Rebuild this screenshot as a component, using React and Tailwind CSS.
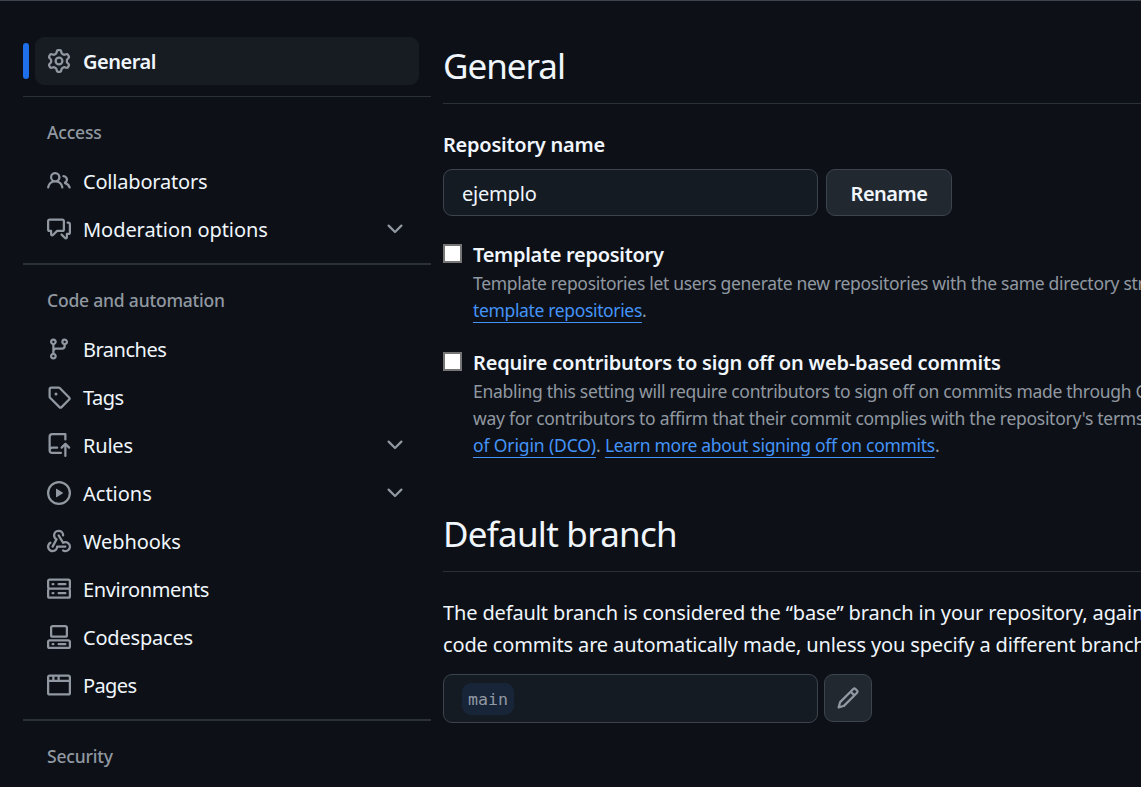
import React from "react";

const PATHS = {
  gear: "M8 0a8.2 8.2 0 0 1 .701.031C9.444.095 9.99.645 10.16 1.29l.288 1.107c.018.066.079.158.212.224.231.114.454.243.668.386.123.082.233.09.299.071l1.103-.303c.644-.176 1.392.021 1.82.63.27.385.506.792.704 1.218.315.675.111 1.422-.364 1.891l-.814.806c-.049.048-.098.147-.088.294.016.257.016.515 0 .772-.01.147.038.246.088.294l.814.806c.475.469.679 1.216.364 1.891a7.977 7.977 0 0 1-.704 1.217c-.428.61-1.176.807-1.82.63l-1.102-.302c-.067-.019-.177-.011-.3.071a5.909 5.909 0 0 1-.668.386c-.133.066-.194.158-.211.224l-.29 1.106c-.168.646-.715 1.196-1.458 1.26a8.006 8.006 0 0 1-1.402 0c-.743-.064-1.289-.614-1.458-1.26l-.289-1.106c-.018-.066-.079-.158-.212-.224a5.738 5.738 0 0 1-.668-.386c-.123-.082-.233-.09-.299-.071l-1.103.303c-.644.176-1.392-.021-1.82-.63a8.12 8.12 0 0 1-.704-1.218c-.315-.675-.111-1.422.363-1.891l.815-.806c.05-.048.098-.147.088-.294a6.214 6.214 0 0 1 0-.772c.01-.147-.038-.246-.088-.294l-.815-.806C.635 6.045.431 5.298.746 4.623a7.92 7.92 0 0 1 .704-1.217c.428-.61 1.176-.807 1.82-.63l1.102.302c.067.019.177.011.3-.071.214-.143.437-.272.668-.386.133-.066.194-.158.211-.224l.29-1.106C6.009.645 6.556.095 7.299.03 7.53.01 7.764 0 8 0Zm-.571 1.525c-.036.003-.108.036-.137.146l-.289 1.105c-.147.561-.549.967-.998 1.189-.173.086-.34.183-.5.29-.417.278-.97.423-1.529.27l-1.103-.303c-.109-.03-.175.016-.195.045-.22.312-.412.644-.573.99-.014.031-.021.11.059.19l.815.806c.411.406.562.957.53 1.456a4.709 4.709 0 0 0 0 .582c.032.499-.119 1.05-.53 1.456l-.815.806c-.081.08-.073.159-.059.19.162.346.353.677.573.989.02.03.085.076.195.046l1.102-.303c.56-.153 1.113-.008 1.53.27.161.107.328.204.501.29.447.222.85.629.997 1.189l.289 1.105c.029.109.101.143.137.146a6.6 6.6 0 0 0 1.142 0c.036-.003.108-.036.137-.146l.289-1.105c.147-.561.549-.967.998-1.189.173-.086.34-.183.5-.29.417-.278.97-.423 1.529-.27l1.103.303c.109.029.175-.016.195-.045.22-.313.411-.644.573-.99.014-.031.021-.11-.059-.19l-.815-.806c-.411-.406-.562-.957-.53-1.456a4.709 4.709 0 0 0 0-.582c-.032-.499.119-1.05.53-1.456l.815-.806c.081-.08.073-.159.059-.19a6.464 6.464 0 0 0-.573-.989c-.02-.03-.085-.076-.195-.046l-1.102.303c-.56.153-1.113.008-1.53-.27a4.44 4.44 0 0 0-.501-.29c-.447-.222-.85-.629-.997-1.189l-.289-1.105c-.029-.11-.101-.143-.137-.146a6.6 6.6 0 0 0-1.142 0ZM11 8a3 3 0 1 1-6 0 3 3 0 0 1 6 0ZM9.5 8a1.5 1.5 0 1 0-3.001.001A1.5 1.5 0 0 0 9.5 8Z",
  people: "M2 5.5a3.5 3.5 0 1 1 5.898 2.549 5.508 5.508 0 0 1 3.034 4.084.75.75 0 1 1-1.482.235 4 4 0 0 0-7.9 0 .75.75 0 0 1-1.482-.236A5.507 5.507 0 0 1 3.102 8.05 3.493 3.493 0 0 1 2 5.5ZM11 4a3.001 3.001 0 0 1 2.22 5.018 5.01 5.01 0 0 1 2.56 3.012.749.749 0 0 1-.885.954.752.752 0 0 1-.549-.514 3.507 3.507 0 0 0-2.522-2.372.75.75 0 0 1-.574-.73v-.352a.75.75 0 0 1 .416-.672A1.5 1.5 0 0 0 11 5.5.75.75 0 0 1 11 4Zm-5.5-.5a2 2 0 1 0-.001 3.999A2 2 0 0 0 5.5 3.5Z",
  discussion: "M1.75 1h8.5c.966 0 1.75.784 1.75 1.75v5.5A1.75 1.75 0 0 1 10.25 10H7.061l-2.574 2.573A1.458 1.458 0 0 1 2 11.543V10h-.25A1.75 1.75 0 0 1 0 8.25v-5.5C0 1.784.784 1 1.75 1ZM1.5 2.75v5.5c0 .138.112.25.25.25h1a.75.75 0 0 1 .75.75v2.19l2.72-2.72a.749.749 0 0 1 .53-.22h3.5a.25.25 0 0 0 .25-.25v-5.5a.25.25 0 0 0-.25-.25h-8.5a.25.25 0 0 0-.25.25Zm13 2a.25.25 0 0 0-.25-.25h-.5a.75.75 0 0 1 0-1.5h.5c.966 0 1.75.784 1.75 1.75v5.5A1.75 1.75 0 0 1 14.25 12H14v1.543a1.458 1.458 0 0 1-2.487 1.03L9.22 12.28a.749.749 0 0 1 .326-1.275.749.749 0 0 1 .734.215l2.22 2.22v-2.19a.75.75 0 0 1 .75-.75h1a.25.25 0 0 0 .25-.25Z",
  branch: "M9.5 3.25a2.25 2.25 0 1 1 3 2.122V6A2.5 2.5 0 0 1 10 8.5H6a1 1 0 0 0-1 1v1.128a2.251 2.251 0 1 1-1.5 0V5.372a2.25 2.25 0 1 1 1.5 0v1.836A2.493 2.493 0 0 1 6 7h4a1 1 0 0 0 1-1v-.628A2.25 2.25 0 0 1 9.5 3.25Zm-6 0a.75.75 0 1 0 1.5 0 .75.75 0 0 0-1.5 0Zm8.25-.75a.75.75 0 1 0 0 1.5.75.75 0 0 0 0-1.5ZM4.25 12a.75.75 0 1 0 0 1.5.75.75 0 0 0 0-1.5Z",
  tag: "M1 7.775V2.75C1 1.784 1.784 1 2.75 1h5.025c.464 0 .91.184 1.238.513l6.25 6.25a1.75 1.75 0 0 1 0 2.474l-5.026 5.026a1.75 1.75 0 0 1-2.474 0l-6.25-6.25A1.752 1.752 0 0 1 1 7.775Zm1.5 0c0 .066.026.13.073.177l6.25 6.25a.25.25 0 0 0 .354 0l5.025-5.025a.25.25 0 0 0 0-.354l-6.25-6.25a.25.25 0 0 0-.177-.073H2.75a.25.25 0 0 0-.25.25ZM6 5a1 1 0 1 1 0 2 1 1 0 0 1 0-2Z",
  push: "M1 2.5A2.5 2.5 0 0 1 3.5 0h8.75a.75.75 0 0 1 .75.75v3.5a.75.75 0 0 1-1.5 0V1.5h-8a1 1 0 0 0-1 1v6.708A2.493 2.493 0 0 1 3.5 9h3.25a.75.75 0 0 1 0 1.5H3.5a1 1 0 0 0 0 2h5.75a.75.75 0 0 1 0 1.5H3.5A2.5 2.5 0 0 1 1 11.5Zm13.23 7.79h-.001l-1.224-1.224v6.184a.75.75 0 0 1-1.5 0V9.066L10.28 10.29a.75.75 0 0 1-1.06-1.061l2.505-2.504a.75.75 0 0 1 1.06 0L15.29 9.23a.751.751 0 0 1-.018 1.042.751.751 0 0 1-1.042.018Z",
  play: "M8 0a8 8 0 1 1 0 16A8 8 0 0 1 8 0ZM1.5 8a6.5 6.5 0 1 0 13 0 6.5 6.5 0 0 0-13 0Zm4.879-2.773 4.264 2.559a.25.25 0 0 1 0 .428l-4.264 2.559A.25.25 0 0 1 6 10.559V5.442a.25.25 0 0 1 .379-.215Z",
  webhook: "M5.5 4.25a2.25 2.25 0 0 1 4.5 0 .75.75 0 0 0 1.5 0 3.75 3.75 0 1 0-6.14 2.889l-2.272 4.258a.75.75 0 0 0 1.324.706L7 7.25a.75.75 0 0 0-.309-1.015A2.25 2.25 0 0 1 5.5 4.25ZM7.364 3.607a.75.75 0 0 1 1.03.257l2.608 4.349a3.75 3.75 0 1 1-.628 6.785.75.75 0 0 1 .752-1.299 2.25 2.25 0 1 0-.033-3.88.75.75 0 0 1-1.03-.256L7.107 4.636a.75.75 0 0 1 .257-1.03ZM2.9 8.776A.75.75 0 0 1 2.625 9.8 2.25 2.25 0 1 0 6 11.75a.75.75 0 0 1 .75-.751h5.5a.75.75 0 0 1 0 1.5H7.425a3.751 3.751 0 1 1-5.55-3.998.75.75 0 0 1 1.024.274Z",
  server: "M1.75 1h12.5c.966 0 1.75.784 1.75 1.75v4c0 .372-.116.717-.314 1 .198.283.314.628.314 1v4a1.75 1.75 0 0 1-1.75 1.75H1.75A1.75 1.75 0 0 1 0 12.75v-4c0-.358.109-.707.314-1a1.739 1.739 0 0 1-.314-1v-4C0 1.784.784 1 1.75 1ZM1.5 2.75v4c0 .138.112.25.25.25h12.5a.25.25 0 0 0 .25-.25v-4a.25.25 0 0 0-.25-.25H1.75a.25.25 0 0 0-.25.25Zm.25 5.75a.25.25 0 0 0-.25.25v4c0 .138.112.25.25.25h12.5a.25.25 0 0 0 .25-.25v-4a.25.25 0 0 0-.25-.25ZM7 4.75A.75.75 0 0 1 7.75 4h4.5a.75.75 0 0 1 0 1.5h-4.5A.75.75 0 0 1 7 4.75ZM7.75 10h4.5a.75.75 0 0 1 0 1.5h-4.5a.75.75 0 0 1 0-1.5ZM3 4.75A.75.75 0 0 1 3.75 4h.5a.75.75 0 0 1 0 1.5h-.5A.75.75 0 0 1 3 4.75ZM3.75 10h.5a.75.75 0 0 1 0 1.5h-.5a.75.75 0 0 1 0-1.5Z",
  codespaces: "M0 11.25c0-.966.784-1.75 1.75-1.75h12.5c.966 0 1.75.784 1.75 1.75v3A1.75 1.75 0 0 1 14.25 16H1.75A1.75 1.75 0 0 1 0 14.25Zm2-9.5C2 .784 2.784 0 3.75 0h8.5C13.216 0 14 .784 14 1.75v5a1.75 1.75 0 0 1-1.75 1.75h-8.5A1.75 1.75 0 0 1 2 6.75Zm1.75-.25a.25.25 0 0 0-.25.25v5c0 .138.112.25.25.25h8.5a.25.25 0 0 0 .25-.25v-5a.25.25 0 0 0-.25-.25Zm-2 9.5a.25.25 0 0 0-.25.25v3c0 .138.112.25.25.25h12.5a.25.25 0 0 0 .25-.25v-3a.25.25 0 0 0-.25-.25ZM7 12.75a.75.75 0 0 1 .75-.75h4.5a.75.75 0 0 1 0 1.5h-4.5a.75.75 0 0 1-.75-.75Zm-4 0a.75.75 0 0 1 .75-.75h.5a.75.75 0 0 1 0 1.5h-.5a.75.75 0 0 1-.75-.75Z",
  browser: "M0 2.75C0 1.784.784 1 1.75 1h12.5c.966 0 1.75.784 1.75 1.75v10.5A1.75 1.75 0 0 1 14.25 15H1.75A1.75 1.75 0 0 1 0 13.25ZM14.5 6h-13v7.25c0 .138.112.25.25.25h12.5a.25.25 0 0 0 .25-.25Zm-6-3.5v2h6V2.75a.25.25 0 0 0-.25-.25ZM5 2.5v2h2v-2Zm-3.25 0a.25.25 0 0 0-.25.25V4.5h2v-2Z",
  chevron: "M12.78 5.22a.749.749 0 0 1 0 1.06l-4.25 4.25a.749.749 0 0 1-1.06 0L3.22 6.28a.749.749 0 1 1 1.06-1.06L8 8.939l3.72-3.719a.749.749 0 0 1 1.06 0Z",
  pencil: "M11.013 1.427a1.75 1.75 0 0 1 2.474 0l1.086 1.086a1.75 1.75 0 0 1 0 2.474l-8.61 8.61c-.21.21-.47.364-.756.445l-3.251.93a.75.75 0 0 1-.927-.928l.929-3.25c.081-.286.235-.547.445-.758l8.61-8.61Zm.176 4.823L9.75 4.81l-6.286 6.287a.253.253 0 0 0-.064.108l-.558 1.953 1.953-.558a.253.253 0 0 0 .108-.064Zm1.238-3.763a.25.25 0 0 0-.354 0L10.811 3.75l1.439 1.44 1.263-1.263a.25.25 0 0 0 0-.354Z",
};

function Icon({ name }) {
  return (
    <svg viewBox="0 0 16 16" className="h-6 w-6 shrink-0 fill-[#9198a1]" aria-hidden="true">
      <path d={PATHS[name]} />
    </svg>
  );
}

function Item({ icon, children, expandable }) {
  return (
    <li className="flex h-12 items-center gap-3 px-3">
      <Icon name={icon} />
      <span className="grow pt-0.5">{children}</span>
      {expandable && <Icon name="chevron" />}
    </li>
  );
}

function Group({ title, children }) {
  return (
    <section>
      <h3 className="flex h-[60px] items-center px-6 pt-2.5 text-[17.5px] font-medium tracking-[-0.2px] text-[#9198a1]">{title}</h3>
      <ul className="px-3">{children}</ul>
    </section>
  );
}

function Link({ children }) {
  return <a className="text-[#4493f8] underline decoration-1 underline-offset-[5px]">{children}</a>;
}

function Option({ title, children }) {
  return (
    <div className="flex gap-[11px]">
      <input type="checkbox" className="mt-[5px] h-[19px] w-[19px] shrink-0 appearance-none border-2 border-[#767676] bg-white" />
      <div>
        <h3 className="h-[31px] text-[20px] leading-[31px] font-semibold">{title}</h3>
        <p className="text-[17.5px] leading-[27px] tracking-[-0.28px] text-[#9198a1]">{children}</p>
      </div>
    </div>
  );
}

export default function App() {
  return (
    <div className="flex h-[787px] w-[1141px] overflow-hidden border-t border-[#3d444d] bg-[#0d1117] pl-[23px] font-['Noto_Sans','Open_Sans',sans-serif] text-[20px] tracking-[-0.2px] whitespace-nowrap text-[#f0f6fc]">
      <nav className="w-[408px] shrink-0 pt-9">
        <div className="flex h-12 items-center gap-1.5">
          <div className="h-9 w-1.5 rounded-full bg-[#1f6feb]" />
          <div className="flex h-12 w-96 items-center gap-3 rounded-[9px] bg-[#171b22] px-3 font-semibold">
            <Icon name="gear" />
            <span className="pt-0.5 tracking-[-0.5px]">General</span>
          </div>
        </div>
        <hr className="mt-[11px] border-t border-[#2b3138]" />
        <Group title="Access">
          <Item icon="people">Collaborators</Item>
          <Item icon="discussion" expandable>
            <span className="tracking-[-0.05px]">Moderation options</span>
          </Item>
        </Group>
        <hr className="mt-2.5 border-t-2 border-[#2b3138]" />
        <Group title="Code and automation">
          <Item icon="branch">
            <span className="tracking-[-0.5px]">Branches</span>
          </Item>
          <Item icon="tag">
            <span className="tracking-[-0.5px]">Tags</span>
          </Item>
          <Item icon="push" expandable>Rules</Item>
          <Item icon="play" expandable>
            <span className="tracking-normal">Actions</span>
          </Item>
          <Item icon="webhook">
            <span className="tracking-[-0.1px]">Webhooks</span>
          </Item>
          <Item icon="server">
            <span className="tracking-[-0.35px]">Environments</span>
          </Item>
          <Item icon="codespaces">Codespaces</Item>
          <Item icon="browser">
            <span className="tracking-[-0.6px]">Pages</span>
          </Item>
        </Group>
        <hr className="mt-2.5 border-t-2 border-[#2b3138]" />
        <Group title="Security" />
      </nav>

      <main className="ml-3 w-[698px] shrink-0 overflow-hidden">
        <h2 className="mt-[38px] h-[65px] border-b border-[#2b3138] text-[35px] leading-[54px] tracking-[-1px]">General</h2>
        <label className="mt-[25px] block h-8 leading-8 font-semibold tracking-[-0.25px]">Repository name</label>
        <div className="mt-2 flex h-[47px] gap-2">
          <div className="flex w-[375px] items-center rounded-[9px] border border-[#3d444d] bg-[#151b23] px-[18px] pt-0.5">ejemplo</div>
          <button className="w-[126px] rounded-[9px] border border-[#3d444d] bg-[#212830] pt-0.5 font-semibold tracking-[-0.5px]">Rename</button>
        </div>
        <div className="mt-[23px] flex flex-col gap-[23px]">
          <Option title={<span className="tracking-[-0.3px]">Template repository</span>}>
            <span className="tracking-[-0.31px]">Template repositories let users generate new repositories with the same directory structure</span>
            <br />
            <span className="tracking-[-0.35px]">
              <Link>template repositories</Link>.
            </span>
          </Option>
          <Option title={<span className="tracking-[-0.18px]">Require contributors to sign off on web-based commits</span>}>
            <span className="tracking-[-0.29px]">Enabling this setting will require contributors to sign off on commits made through GitHub</span>
            <br />
            way for contributors to affirm that their commit complies with the repository's terms
            <br />
            <span className="tracking-[-0.13px]">
              <Link>of Origin (DCO)</Link>.{" "}
            </span>
            <span className="tracking-[-0.3px]">
              <Link>Learn more about signing off on commits</Link>.
            </span>
          </Option>
        </div>
        <h2 className="mt-12 h-[65px] border-b border-[#2b3138] text-[35px] leading-[54px] tracking-[-0.75px]">Default branch</h2>
        <p className="mt-[25px] leading-8 tracking-[-0.13px]">
          The default branch is considered the “base” branch in your repository, against which
          <br />
          code commits are automatically made, unless you specify a different branch.
        </p>
        <div className="mt-[13px] flex gap-1.5">
          <div className="flex h-[49px] w-[375px] items-center rounded-[9px] border border-[#3d444d] bg-[#151b23] px-[18px]">
            <span className="flex h-8 items-center rounded-[9px] bg-[#182539] px-1.5 pt-[3px] font-['DejaVu_Sans_Mono',monospace] text-[16.6px] tracking-normal text-[#9198a1]">main</span>
          </div>
          <button className="flex h-12 w-12 items-center justify-center rounded-[9px] border border-[#3d444d] bg-[#212830]">
            <Icon name="pencil" />
          </button>
        </div>
      </main>
    </div>
  );
}
